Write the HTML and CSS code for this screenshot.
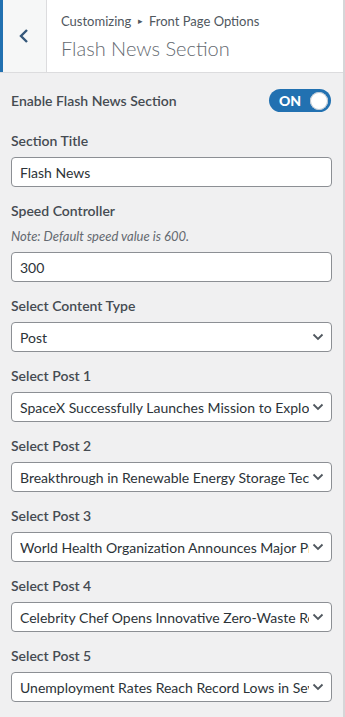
FILE: index.html
```html
<!DOCTYPE html>
<html>
  <head>
    <meta charset="utf-8">
    <meta name="viewport" content="width=device-width, initial-scale=1">
    <link rel="stylesheet" href="styles.css">
    <title>Flash News Section</title>
  </head>
  <body>
    <div id="sidebar">
      <div class="panel-head">
        <button class="panel-back" type="button" aria-label="Back">
          <svg width="12" height="16" viewBox="0 0 12 16"><path d="M9 2 L3 8 L9 14" fill="none" stroke="currentColor" stroke-width="2.4"/></svg>
        </button>
        <div class="panel-title">
          <span class="crumb">Customizing <span class="sep">&#9656;</span> Front Page Options</span>
          <h3>Flash News Section</h3>
        </div>
      </div>

      <ul class="controls">
        <li class="control toggle-row">
          <span class="control-title">Enable Flash News Section</span>
          <span class="switch"><b>ON</b><i class="knob"></i></span>
        </li>
        <li class="control">
          <label class="control-title" for="title">Section Title</label>
          <input type="text" id="title" value="Flash News">
        </li>
        <li class="control">
          <label class="control-title" for="speed">Speed Controller</label>
          <span class="note">Note: Default speed value is 600.</span>
          <input type="text" id="speed" value="300">
        </li>
        <li class="control">
          <label class="control-title">Select Content Type</label>
          <div class="select-wrap">
            <select><option>Post</option><option>Category</option></select>
            <svg class="caret" width="12" height="8" viewBox="0 0 12 8"><path d="M1.5 1.5 L6 6 L10.5 1.5" fill="none" stroke="currentColor" stroke-width="1.8"/></svg>
          </div>
        </li>
        <li class="control">
          <label class="control-title">Select Post 1</label>
          <div class="select-wrap">
            <select><option>SpaceX Successfully Launches Mission to Explore Mars</option></select>
            <svg class="caret" width="12" height="8" viewBox="0 0 12 8"><path d="M1.5 1.5 L6 6 L10.5 1.5" fill="none" stroke="currentColor" stroke-width="1.8"/></svg>
          </div>
        </li>
        <li class="control">
          <label class="control-title">Select Post 2</label>
          <div class="select-wrap">
            <select><option>Breakthrough in Renewable Energy Storage Technology</option></select>
            <svg class="caret" width="12" height="8" viewBox="0 0 12 8"><path d="M1.5 1.5 L6 6 L10.5 1.5" fill="none" stroke="currentColor" stroke-width="1.8"/></svg>
          </div>
        </li>
        <li class="control">
          <label class="control-title">Select Post 3</label>
          <div class="select-wrap">
            <select><option>World Health Organization Announces Major Progress</option></select>
            <svg class="caret" width="12" height="8" viewBox="0 0 12 8"><path d="M1.5 1.5 L6 6 L10.5 1.5" fill="none" stroke="currentColor" stroke-width="1.8"/></svg>
          </div>
        </li>
        <li class="control">
          <label class="control-title">Select Post 4</label>
          <div class="select-wrap">
            <select><option>Celebrity Chef Opens Innovative Zero-Waste Restaurant</option></select>
            <svg class="caret" width="12" height="8" viewBox="0 0 12 8"><path d="M1.5 1.5 L6 6 L10.5 1.5" fill="none" stroke="currentColor" stroke-width="1.8"/></svg>
          </div>
        </li>
        <li class="control">
          <label class="control-title">Select Post 5</label>
          <div class="select-wrap">
            <select><option>Unemployment Rates Reach Record Lows in Several States</option></select>
            <svg class="caret" width="12" height="8" viewBox="0 0 12 8"><path d="M1.5 1.5 L6 6 L10.5 1.5" fill="none" stroke="currentColor" stroke-width="1.8"/></svg>
          </div>
        </li>
      </ul>
    </div>
  </body>
</html>
```

FILE: styles.css
```css
html, body {
    margin: 0; padding: 0;
    height: 100%;
}
body {
    font-family: Lato, 'Noto Sans', sans-serif; font-size: 14px;
    color: #3c434a; background: #f0f0f1;
}
#sidebar {
    min-height: 100%; box-sizing: border-box;
    border-right: 2px solid #d6d6d8;
    background: #f0f0f1;
}

/* header */
.panel-head {
    display: flex; height: 72px;
    background: #fff; border-bottom: 1px solid #dcdcde;
}
.panel-back {
    width: 47px; padding: 0; margin: 0;
    background: #f6f7f7; color: #34577a;
    border: 0; border-left: 3px solid #2271b1; border-right: 1px solid #dcdcde;
    display: flex; align-items: center; justify-content: center;
}
.panel-back svg { margin-left: -2px; }
.panel-title {
    padding: 11px 0 0 14px;
    display: flex; flex-direction: column;
}
.crumb {
    font-size: 13px; line-height: 20px; color: #50575e;
}
.crumb .sep { font-size: 9px; vertical-align: 2px; margin: 0 3px; }
.panel-title h3 {
    margin: 4px 0 0; font-size: 20px; line-height: 26px;
    font-weight: 300; color: #646970;
}

/* controls */
.controls {
    list-style: none; margin: 0; padding: 16px 11px 0;
}
.control { margin: 0 0 14px; }
.control-title {
    display: block; font-weight: 600; line-height: 20px;
    margin-bottom: 6px; color: #454b52;
}
.toggle-row {
    display: flex; align-items: center; justify-content: space-between;
    height: 23px; margin-bottom: 19px;
}
.toggle-row .control-title { margin: 0; }
.switch {
    display: flex; align-items: center; justify-content: space-between;
    width: 62px; height: 23px; box-sizing: border-box;
    padding: 0 3px 0 10px; margin-right: 1px;
    background: #2271b1; border-radius: 12px;
    color: #fff; font-weight: 700; font-size: 14px;
}
.knob {
    width: 18px; height: 18px; border-radius: 50%;
    background: #fff; box-shadow: 0 0 0 1px #b9c4cf inset;
}
.note {
    display: block; margin: 0 0 7px;
    font-size: 13px; line-height: 18px; font-style: italic; color: #646970;
}
input[type="text"], select {
    display: block; width: 100%; height: 30px; box-sizing: border-box;
    margin: 0; padding: 0 8px;
    font-family: inherit; font-size: 14px; color: #2c3338;
    background: #fff; border: 1px solid #8c8f94; border-radius: 4px;
}
.select-wrap { position: relative; }
select {
    -webkit-appearance: none; appearance: none;
    padding-right: 22px;
}
.caret {
    position: absolute; right: 8px; top: 11px;
    color: #50575e; pointer-events: none;
}
```
